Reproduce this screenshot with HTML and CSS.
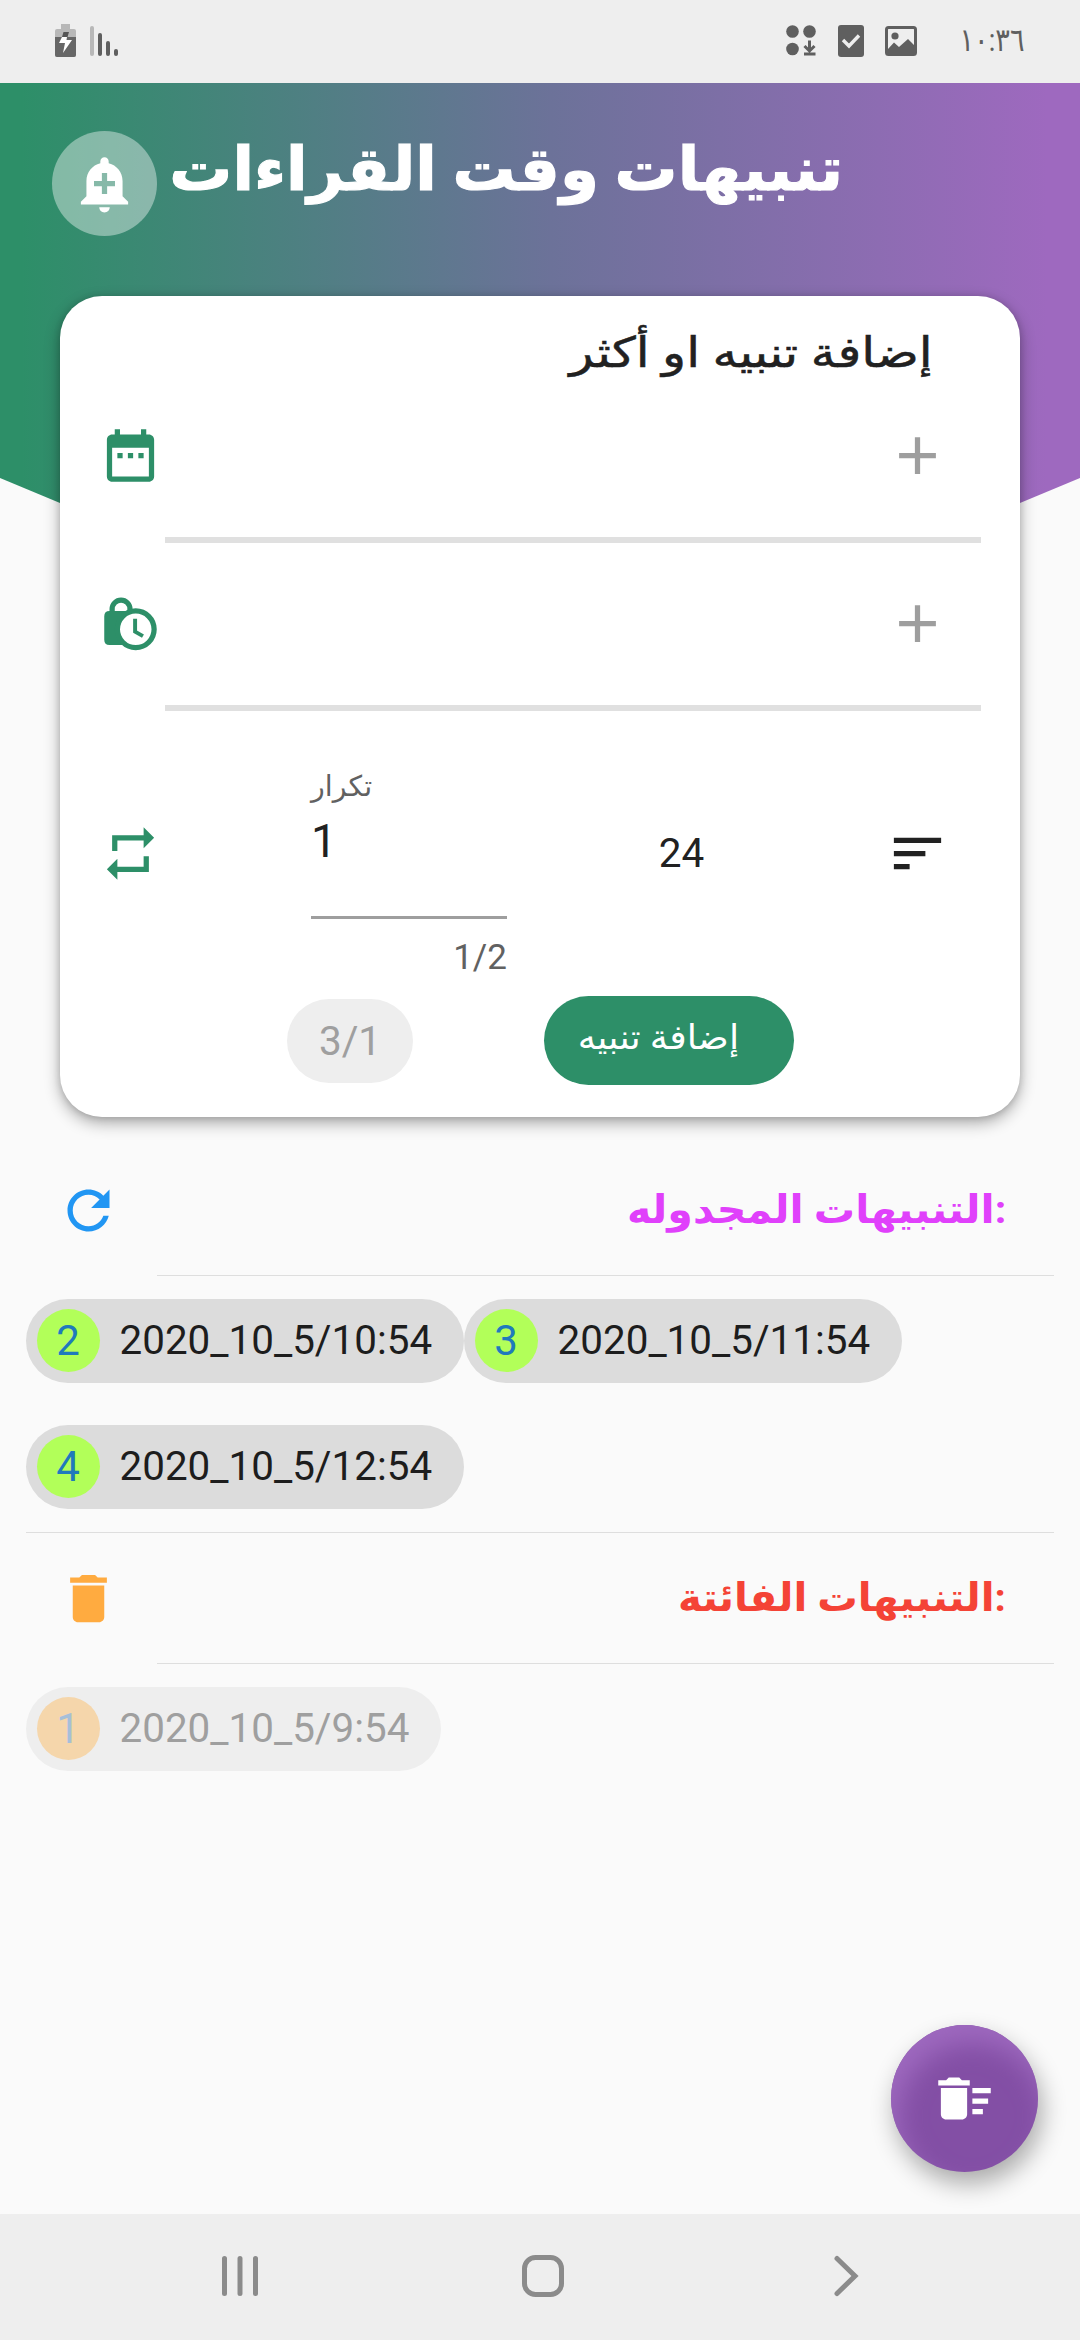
FILE: index.html
```html
<!DOCTYPE html>
<html lang="ar">
<head>
<meta charset="utf-8">
<title>تنبيهات وقت القراءات</title>
<link rel="stylesheet" href="styles.css">
</head>
<body>
<div class="screen">
  <header class="status">
    <div class="status-group">
      <svg class="battery" viewBox="0 0 21 33"><path d="M6 0h9v5h4q2 0 2 2v24q0 2-2 2H2q-2 0-2-2V7q0-2 2-2h4z" fill="#b8b8b8"/><path d="M0 13h21v18q0 2-2 2H2q-2 0-2-2z" fill="#666"/><path d="M8.500 8H14l-1.500 5H7z" fill="#555"/><path d="M7 13h5l-.5 3h5.500L8 29l2-10H4z" fill="#fff"/></svg>
      <svg class="signal" viewBox="0 0 28 31"><rect width="4" height="30" rx="2" fill="#b8b8b8"/><g fill="#5f5f5f"><rect x="8" y="7" width="4" height="23" rx="2"/><rect x="16" y="15" width="4" height="15" rx="2"/><rect x="24" y="23" width="4" height="7" rx="2"/></g></svg>
    </div>
    <div class="status-group status-right">
      <svg class="apps" viewBox="0 0 30 31"><g fill="#5f5f5f"><circle cx="6.500" cy="6.500" r="6.300"/><circle cx="23.500" cy="6.500" r="6.300"/><circle cx="6.500" cy="24" r="6.300"/></g><path d="M23.500 15.500v10M18.500 21l5 5 5-5M18 29h11.500" fill="none" stroke="#5f5f5f" stroke-width="3"/></svg>
      <svg class="task" viewBox="0 0 26 32"><rect width="26" height="32" rx="3" fill="#5f5f5f"/><path d="M5 15l6 6 10-10.500" fill="none" stroke="#eee" stroke-width="3.400"/></svg>
      <svg class="image" viewBox="0 0 32 30"><rect x="1.500" y="1.500" width="29" height="27" rx="2" fill="none" stroke="#5f5f5f" stroke-width="3"/><circle cx="10" cy="10" r="3.600" fill="#5f5f5f"/><path d="M3 23l6-6.500 5 4.500 9-8 7 7v8H3z" fill="#5f5f5f"/></svg>
      <span class="clock"><span class="fit">١٠:٣٦</span></span>
    </div>
  </header>

  <main class="app">
    <div class="title-row">
      <div class="bell"><svg class="icon" viewBox="0 0 24 24"><path d="M10.010 21.010c0 1.100.890 1.990 1.990 1.990s1.990-.890 1.990-1.990h-3.980zm8.870-4.190V11c0-3.250-2.250-5.970-5.290-6.690v-.720C13.590 2.710 12.880 2 12 2s-1.590.710-1.590 1.590v.720C7.370 5.030 5.120 7.750 5.120 11v5.820L3 18.940V20h18v-1.060l-2.120-2.120zM16 13.010h-3v3h-2v-3H8V11h3V8h2v3h3v2.010z"/></svg></div>
      <h1 class="title"><span class="fit">تنبيهات وقت القراءات</span></h1>
    </div>

    <section class="card">
      <h2 class="card-title"><span class="fit">إضافة تنبيه او أكثر</span></h2>
      <div class="field">
        <svg class="icon green" viewBox="0 0 24 24"><path d="M9 11H7v2h2v-2zm4 0h-2v2h2v-2zm4 0h-2v2h2v-2zm2-7h-1V2h-2v2H8V2H6v2H5c-1.110 0-1.990.900-1.990 2L3 20c0 1.100.890 2 2 2h14c1.100 0 2-.900 2-2V6c0-1.100-.900-2-2-2zm0 16H5V9h14v11z"/></svg>
        <svg class="icon grey" viewBox="0 0 24 24"><path d="M19 13h-6v6h-2v-6H5v-2h6V5h2v6h6v2z"/></svg>
      </div>
      <div class="rule"></div>
      <div class="field">
        <svg class="icon green" viewBox="0 0 24 24"><path d="M2 9.200Q2 7.200 4 7.200V6.500a4.400 4.400 0 0 1 8.800 0v1h-2V6.500a2.400 2.400 0 0 0-4.800 0v.700h5l-3 7 3 6H4q-2 0-2-2z"/><circle cx="14" cy="14.200" r="7" fill="#fff" stroke="#2d8f68" stroke-width="2"/><path d="M13.750 10.200v4.900l3 1.700" fill="none" stroke="#2d8f68" stroke-width="1.500"/></svg>
        <svg class="icon grey" viewBox="0 0 24 24"><path d="M19 13h-6v6h-2v-6H5v-2h6V5h2v6h6v2z"/></svg>
      </div>
      <div class="rule"></div>
      <div class="repeat-row">
        <svg class="icon green" viewBox="0 0 24 24"><path d="M7 7h10v3l4-4-4-4v3H5v6h2V7zm10 10H7v-3l-4 4 4 4v-3h12v-6h-2v4z"/></svg>
        <div class="repeat">
          <label class="repeat-label"><span class="fit">تكرار</span></label>
          <div class="repeat-value">1</div>
          <div class="repeat-count">1/2</div>
        </div>
        <div class="hours">24</div>
        <svg class="icon dark" viewBox="0 0 24 24"><path d="M3 18h6v-2H3v2zM3 6v2h18V6H3zm0 7h12v-2H3v2z"/></svg>
      </div>
      <div class="actions">
        <span class="counter">3/1</span>
        <button class="add"><span class="fit">إضافة تنبيه</span></button>
      </div>
    </section>

    <section class="list">
      <div class="list-head">
        <svg class="icon blue" viewBox="0 0 24 24"><path d="M17.650 6.350C16.200 4.900 14.210 4 12 4c-4.420 0-7.990 3.580-7.990 8s3.570 8 7.990 8c3.730 0 6.840-2.550 7.730-6h-2.080c-.820 2.330-3.040 4-5.650 4-3.310 0-6-2.690-6-6s2.690-6 6-6c1.660 0 3.140.690 4.220 1.780L13 11h7V4l-2.350 2.350z"/></svg>
        <h3 class="list-title scheduled"><span class="fit">التنبيهات المجدوله:</span></h3>
      </div>
      <div class="chips">
        <span class="chip"><b class="num">2</b>2020_10_5/10:54</span><span class="chip"><b class="num">3</b>2020_10_5/11:54</span><span class="chip"><b class="num">4</b>2020_10_5/12:54</span>
      </div>
    </section>
    <section class="list missed-list">
      <div class="list-head">
        <svg class="icon orange" viewBox="0 0 24 24"><path d="M6 19c0 1.100.900 2 2 2h8c1.100 0 2-.900 2-2V7H6v12zM19 4h-3.500l-1-1h-5l-1 1H5v2h14V4z"/></svg>
        <h3 class="list-title missed"><span class="fit">التنبيهات الفائتة:</span></h3>
      </div>
      <div class="chips">
        <span class="chip off"><b class="num">1</b>2020_10_5/9:54</span>
      </div>
    </section>
    <button class="fab"><svg class="icon" viewBox="0 0 24 24"><path d="M15 16h4v2h-4zm0-8h7v2h-7zm0 4h6v2h-6zM3 18c0 1.100.900 2 2 2h6c1.100 0 2-.900 2-2V8H3v10zM14 5h-3l-1-1H6L5 5H2v2h12z"/></svg></button>
  </main>

  <nav class="nav">
    <svg viewBox="0 0 44 44"><path d="M6.500 4.500v35M22 4.500v35M37.500 4.500v35"/></svg>
    <svg viewBox="0 0 44 44"><rect x="3.500" y="3.500" width="37" height="37" rx="11"/></svg>
    <svg viewBox="0 0 44 44"><path d="M14 4.500L32 22 14 39.500"/></svg>
  </nav>
</div>
</body>
</html>
```

FILE: styles.css
```css
* { box-sizing: border-box; }
body {
  margin: 0;
  background: #fafafa;
  font-family: Roboto, "DejaVu Sans", sans-serif;
  color: #212121;
}
h1, h2, h3 { margin: 0; font-weight: 400; }
button { border: 0; padding: 0; font: inherit; color: #fff; }
.fit { display: inline-block; white-space: nowrap; transform-origin: right center; }
.icon { display: block; flex: none; width: 63px; height: 63px; fill: #fff; }
.green { fill: #2d8f68; }
.grey { fill: #9e9e9e; }
.dark { fill: #212121; }
.blue { fill: #2196f3; }
.orange { fill: #ffab40; }

.screen { display: flex; flex-direction: column; width: 1080px; height: 2340px; overflow: hidden; }

.status {
  display: flex;
  justify-content: space-between;
  height: 83px;
  padding: 24px 56px 0 55px;
  background: #eee;
}
.status-group { display: flex; align-items: flex-start; }
.battery { width: 21px; height: 33px; margin-right: 14px; }
.signal { width: 28px; height: 31px; margin-top: 2px; }
.apps { width: 30px; height: 31px; margin: 1px 22px 0 0; }
.task { width: 26px; height: 32px; margin: 1px 21px 0 0; }
.image { width: 32px; height: 30px; margin: 2px 43px 0 0; }
.clock { width: 64px; font-size: 32px; line-height: 33px; color: #5f5f5f; direction: rtl; }
.clock .fit { transform: scaleX(.85); }

.app { position: relative; z-index: 0; flex: 1; display: flex; flex-direction: column; }
.app::before {
  content: "";
  position: absolute;
  z-index: -1;
  inset: 0 0 auto;
  height: 420px;
  background: linear-gradient(90deg, #2d8f68 2%, #6c7299 51%, #9e69bf 97%);
  clip-path: polygon(0 0, 100% 0, 100% 395px, 1020px 420px, 60px 420px, 0 395px);
}
.title-row { display: flex; height: 213px; padding: 48px 237px 0 52px; justify-content: space-between; }
.bell {
  display: grid;
  place-items: center;
  flex: none;
  width: 105px;
  height: 105px;
  border-radius: 50%;
  background: rgba(255, 255, 255, .4);
}
.title { flex: 1; direction: rtl; font-weight: 700; font-size: 60px; line-height: 78px; color: #fff; }
.title .fit { transform: scaleX(1.046); -webkit-text-stroke: 1.2px #fff; }

.card {
  height: 821px;
  margin: 0 60px;
  padding: 28px 39px 0;
  border-radius: 42px;
  background: #fff;
  box-shadow: 0 6px 16px rgba(0, 0, 0, .32), 0 1px 7px rgba(0, 0, 0, .14);
}
.card-title { height: 60px; padding-right: 48px; direction: rtl; font-size: 42px; line-height: 58px; }
.card-title .fit { transform: scaleX(1.188); -webkit-text-stroke: .5px currentColor; }
.field { display: flex; justify-content: space-between; height: 153px; padding: 40px 32px 0 0; }
.rule { height: 6px; margin-left: 66px; background: #e0e0e0; }
.rule + .field { height: 162px; padding-top: 49px; }
.repeat-row { display: flex; height: 285px; padding-right: 32px; }
.repeat-row > .icon { margin-top: 111px; }
.repeat { width: 196px; margin-left: 149px; padding-top: 46px; }
.repeat-label { display: block; height: 52px; padding-top: 8px; font-size: 28.5px; line-height: 44px; color: #616161; }
.repeat-value { height: 110px; padding-top: 5px; border-bottom: 3px solid #9e9e9e; font-size: 46px; line-height: 54px; }
.repeat-count { padding-top: 17px; text-align: right; font-size: 35px; line-height: 44px; color: #616161; }
.hours { flex: 1; padding: 111px 30px 0 0; text-align: center; font-size: 40.500px; line-height: 63px; }
.actions { display: flex; align-items: center; height: 89px; margin-left: 188px; }
.counter {
  width: 126px;
  border-radius: 42px;
  background: #eee;
  color: #9f9f9f;
  text-align: center;
  font-size: 40.500px;
  line-height: 84px;
}
.add {
  display: flex;
  align-items: center;
  justify-content: flex-end;
  width: 250px;
  height: 89px;
  margin-left: 131px;
  padding: 0 55px 7px 0;
  border-radius: 45px;
  background: #2d8f68;
  font-size: 34px;
}
.add .fit { transform: scaleX(1.075); }

.list { margin: 29px 26px 0; }
.missed-list { margin-top: 23px; border-top: 1px solid #dedede; }
.list-head { position: relative; display: flex; justify-content: space-between; height: 130px; padding: 33px 48px 0 31px; }
.missed-list .list-head { height: 131px; padding-top: 34px; }
.list-head::after { content: ""; position: absolute; inset: auto 0 0 131px; height: 1px; background: #dedede; }
.list-title { font-size: 39px; font-weight: 700; line-height: 63px; }
.scheduled { color: #e040fb; }
.scheduled .fit { transform: scaleX(1.056); }
.missed { color: #f44336; }
.missed .fit { transform: scaleX(1.035); }
.chips { display: flex; flex-wrap: wrap; row-gap: 42px; padding-top: 23px; }
.chip {
  display: flex;
  align-items: center;
  height: 84px;
  padding: 0 32px 1px 10.5px;
  border-radius: 42px;
  background: #dcdcdc;
  color: #1d1d1d;
  font-size: 40.400px;
}
.num {
  width: 63px;
  margin-right: 20px;
  border-radius: 50%;
  background: #b2ff59;
  color: #1f7abc;
  font-weight: 400;
  font-size: 42px;
  line-height: 63px;
  text-align: center;
}
.off { background: #eee; color: #9f9f9f; }
.off .num { background: #f5d6ab; color: #a6bfd8; }

.fab {
  position: absolute;
  left: 891px;
  top: 1942px;
  display: grid;
  place-items: center;
  width: 147px;
  height: 147px;
  border-radius: 50%;
  background: #834fa5;
  box-shadow: inset 8px 18px 26px #9e69bf, 4px 12px 24px rgba(0, 0, 0, .32);
}

.nav { display: flex; justify-content: space-between; align-items: center; height: 126px; padding: 0 213px 2px 218px; background: #eee; }
.nav svg { width: 44px; height: 44px; fill: none; stroke: #8b8b8b; stroke-width: 5; stroke-linecap: round; }
```
